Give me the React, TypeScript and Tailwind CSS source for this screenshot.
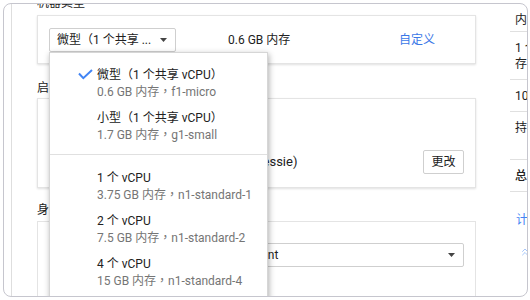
import React from "react";
import { ChevronsUp } from "lucide-react";

function Caret() {
  return (
    <svg width="7" height="4" viewBox="0 0 7 4" className="shrink-0">
      <path d="M0 0H7L3.5 4Z" fill="#444" />
    </svg>
  );
}

function Check() {
  return (
    <svg width="16" height="16" viewBox="0 0 16 16">
      <path d="M2 6.5L6.3 11.2L15 3" fill="none" stroke="#4285f4" strokeWidth="2" />
    </svg>
  );
}

function MenuItem({ title, sub, checked }: { title: string; sub: string; checked?: boolean }) {
  return (
    <div className="flex pl-[27px] pt-[6px] pb-[3px]">
      <div className="w-[20px] h-[18px] flex items-center shrink-0">{checked && <Check />}</div>
      <div className="flex flex-col whitespace-nowrap">
        <div className="text-[12px] leading-[18px] text-[#212121]">{title}</div>
        <div className="text-[12px] leading-[16px] text-[#757575]">{sub}</div>
      </div>
    </div>
  );
}

function Row({ children, right, className = "" }: { children: React.ReactNode; right?: string; className?: string }) {
  return (
    <div className={`flex justify-between pl-[5px] pr-[8px] pt-[8px] pb-[7px] border-b border-[#e0e0e0] ${className}`}>
      <div className="w-[145px]">{children}</div>
      <div>{right}</div>
    </div>
  );
}

export default function App() {
  return (
    <div className="w-[530px] h-[300px] bg-white pt-[3px] pl-[3px] font-['Roboto','Noto_Sans_CJK_TC',sans-serif] text-[12px] text-[#212121]">
      <div className="w-[525px] h-[294px] border border-[#c6c6ce] rounded-[8px] overflow-hidden flex">
        <div className="w-[7px] shrink-0" />
        <div className="flex-1 border-l border-[#dedede] flex items-start">
          {/* main column */}
          <div className="ml-[25px] w-[439px] shrink-0 flex flex-col">
            <div className="mt-[-10px] h-[18px] leading-[18px]">机器类型</div>
            <div className="mt-[3px] h-[49px] border border-[#e4e4e4] shadow-[0_1px_2px_rgba(0,0,0,0.12)] flex items-center pl-[11px] relative z-10">
              <div className="relative">
                <div className="h-[24px] w-[127px] border border-[#cfcfcf] rounded-[2px] flex items-center justify-between pl-[7px] pr-[8px] whitespace-nowrap">
                  <span>微型（1 个共享 ...</span>
                  <Caret />
                </div>
                <div className="absolute left-0 top-[24px] w-[219px] h-[260px] bg-white border border-[#d6d6d6] shadow-[1px_2px_6px_rgba(0,0,0,0.32)] pt-[7px]">
                  <MenuItem checked title="微型（1 个共享 vCPU）" sub="0.6 GB 内存，f1-micro" />
                  <MenuItem title="小型（1 个共享 vCPU）" sub="1.7 GB 内存，g1-small" />
                  <div className="my-[8px] h-px bg-[#e0e0e0]" />
                  <MenuItem title="1 个 vCPU" sub="3.75 GB 内存，n1-standard-1" />
                  <MenuItem title="2 个 vCPU" sub="7.5 GB 内存，n1-standard-2" />
                  <MenuItem title="4 个 vCPU" sub="15 GB 内存，n1-standard-4" />
                  <MenuItem title="8 个 vCPU" sub="30 GB 内存，n1-standard-8" />
                </div>
              </div>
              <div className="ml-[52px] w-[171px] whitespace-nowrap">0.6 GB 内存</div>
              <div className="text-[#3b78e7]">自定义</div>
            </div>

            <div className="mt-[15px] h-[18px] leading-[18px]">启动磁盘</div>
            <div className="mt-[1px] h-[90px] border border-[#e4e4e4] shadow-[0_1px_2px_rgba(0,0,0,0.12)] flex items-end justify-between pl-[97px] pr-[11px] pb-[13px]">
              <div className="flex flex-col leading-[18px] mb-[3px] whitespace-nowrap">
                <div>新 10 GB 永久性磁盘</div>
                <div className="text-[#757575]">映像</div>
                <div className="text-[13px]">Debian GNU/Linux 8 (jessie)</div>
              </div>
              <div className="h-[24px] w-[41px] border border-[#cfcfcf] rounded-[2px] flex items-center justify-center">更改</div>
            </div>

            <div className="mt-[13px] h-[18px] leading-[18px]">身份和 API 访问权限</div>
            <div className="mt-[2px] h-[120px] border border-[#e4e4e4] px-[11px] pt-[5px]">
              <div className="h-[16px] leading-[16px] text-[#757575]">服务帐号</div>
              <div className="h-[24px] border border-[#cfcfcf] rounded-[2px] flex items-center justify-between pl-[13px] pr-[8px] whitespace-nowrap">
                <span>Compute Engine default service account</span>
                <Caret />
              </div>
            </div>
          </div>

          {/* right column */}
          <div className="ml-[34px] w-[240px] shrink-0 flex flex-col text-[12px] leading-[16px]">
            <div className="pl-[5px] pt-[8px] pb-[3px] border-b border-[#e0e0e0]">内存</div>
            <Row right="$3.88">1 个共享 vCPU + 0.6 GB 内存</Row>
            <Row right="$0.40">10 GB 标准永久性磁盘</Row>
            <Row right="-$1.16" className="h-[48px]">持续使用折扣</Row>
            <Row right="$4.28" className="font-medium">总计</Row>
            <div className="pl-[6px] mt-[20px] text-[#4285f4]">计算引擎定价</div>
            <div className="pl-[9px] mt-[16px] text-[#8ab4f8] flex items-center gap-[4px] h-[16px]">
              <ChevronsUp size={12} strokeWidth={1.5} />
              <span>较少</span>
            </div>
          </div>
        </div>
      </div>
    </div>
  );
}
